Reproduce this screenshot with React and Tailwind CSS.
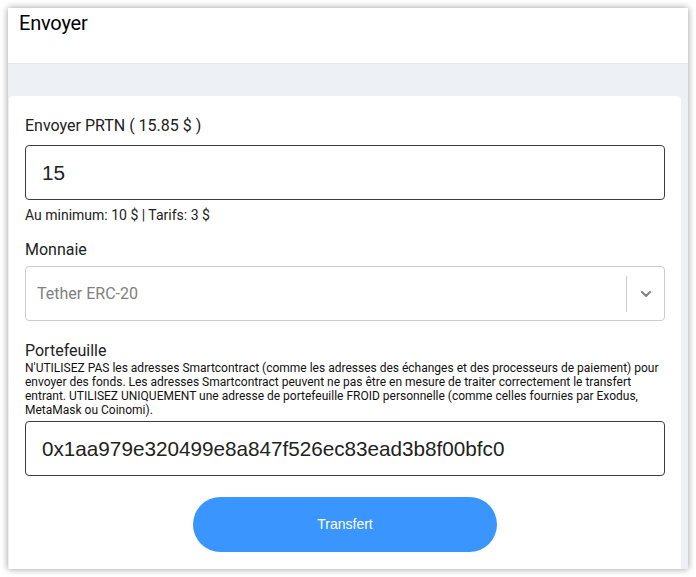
import { ChevronDown } from "lucide-react";

const font = { fontFamily: "Roboto, 'Liberation Sans', sans-serif" };
const arial = { fontFamily: "'Liberation Sans', Arial, sans-serif" };

export default function App() {
  return (
    <div className="min-h-screen bg-white p-2 text-[#212529]" style={font}>
      <div className="flex h-[561px] flex-col bg-[#edf0f4] shadow-[0_0_7px_rgba(0,0,0,0.4)]">
        {/* header */}
        <div className="h-[56px] border-b border-[#e3e6ea] bg-white px-[11px] pt-[3px]">
          <h1 className="text-[20px] leading-[24px] tracking-[-0.2px] text-black">Envoyer</h1>
        </div>
        <div className="h-[32px] shrink-0" />

        {/* card */}
        <div className="ml-px mr-[7px] flex-1 rounded-t-[4px] bg-white px-4 pt-[20px]">
          <label className="block text-[16px] leading-[20px] text-[#222]">Envoyer PRTN ( 15.85 $ )</label>
          <div
            className="mt-[9px] flex h-[55px] items-center rounded-[4px] border border-[#3d3d3d] px-[16px] text-[20.7px] text-[#222]"
            style={arial}
          >
            15
          </div>
          <p className="mt-[7px] text-[14px] leading-[16px] text-[#222]">Au minimum: 10 $ | Tarifs: 3 $</p>

          <label className="mt-[17px] block text-[16px] leading-[20px] text-[#222]">Monnaie</label>
          <div className="mt-[6px] flex h-[55px] items-center rounded-[4px] border border-[#cccccc]">
            <span className="flex-1 pl-[11px] text-[16px] text-[#808080]">Tether ERC-20</span>
            <span className="h-[36px] w-px bg-[#cccccc]" />
            <span className="flex w-[37px] items-center justify-center text-[#808080]">
              <ChevronDown size={16} strokeWidth={3} />
            </span>
          </div>

          <label className="mt-[20px] block text-[16px] leading-[20px] text-[#222]">Portefeuille</label>
          <p className="text-[12px] leading-[14px] text-[#111]">
            N'UTILISEZ PAS les adresses Smartcontract (comme les adresses des échanges et des processeurs de paiement) pour
            envoyer des fonds. Les adresses Smartcontract peuvent ne pas être en mesure de traiter correctement le transfert
            entrant. UTILISEZ UNIQUEMENT une adresse de portefeuille FROID personnelle (comme celles fournies par Exodus,
            MetaMask ou Coinomi).
          </p>
          <div
            className="mt-[4px] flex h-[55px] items-center rounded-[4px] border border-[#3d3d3d] px-[16px] text-[20.7px] text-[#222]"
            style={arial}
          >
            0x1aa979e320499e8a847f526ec83ead3b8f00bfc0
          </div>

          <div className="mt-[21px] flex justify-center">
            <button className="h-[55px] w-[304px] rounded-full bg-[#3a96fe] text-[14px] text-white" style={arial}>
              Transfert
            </button>
          </div>
        </div>
      </div>
    </div>
  );
}
